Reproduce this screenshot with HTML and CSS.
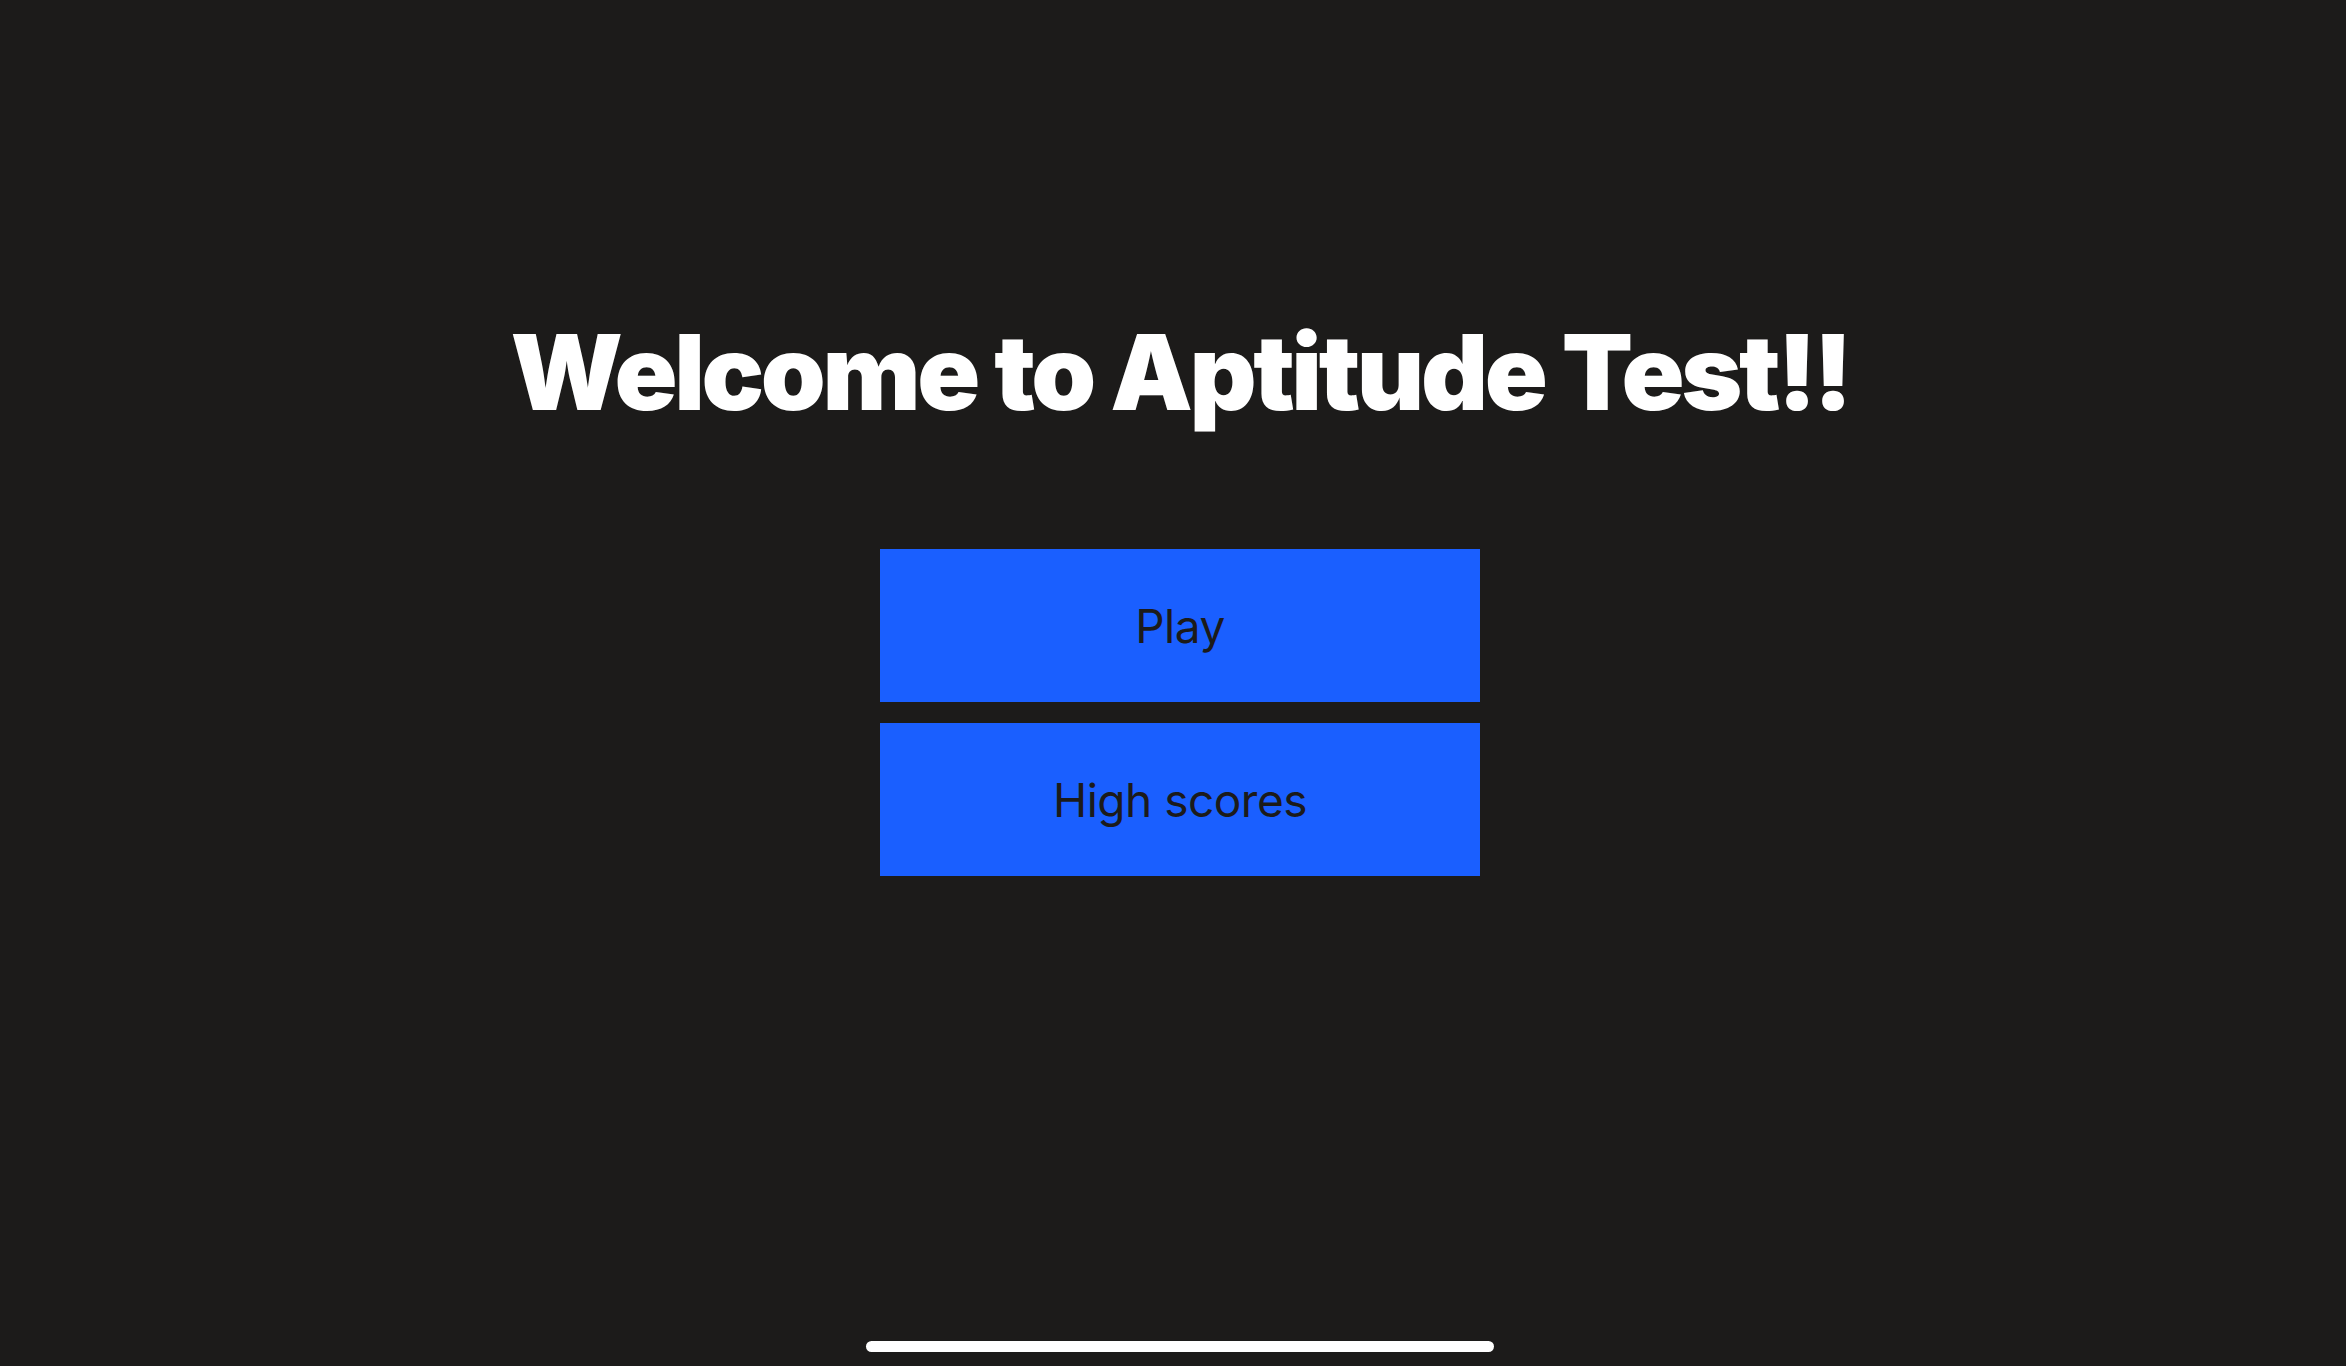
FILE: index.html
```html
<!DOCTYPE html>
<html lang="en">
<head>
<meta charset="utf-8">
<title>Aptitude Test</title>
<link rel="stylesheet" href="styles.css">
</head>
<body>
<main class="screen">
  <h1 class="title">Welcome to Aptitude Test!!</h1>
  <div class="menu">
    <button class="menu-btn">Play</button>
    <button class="menu-btn">High scores</button>
  </div>
</main>
<div class="home-indicator"></div>
</body>
</html>
```
FILE: styles.css
```css
html, body {
  margin: 0;
  padding: 0;
}
body {
  background: #1c1b1a;
  width: 2346px;
  height: 1366px;
  overflow: hidden;
  display: flex;
  flex-direction: column;
  align-items: center;
  padding-left: 14px;
  box-sizing: border-box;
  font-family: Inter, "Noto Sans", sans-serif;
}
.screen {
  flex: 1;
  display: flex;
  flex-direction: column;
  align-items: center;
  padding-top: 304px;
}
.title {
  margin: 0;
  color: #ffffff;
  font-size: 104px;
  font-weight: 900;
  line-height: 136px;
  letter-spacing: -3.4px;
  white-space: nowrap;
}
.menu {
  display: flex;
  flex-direction: column;
  gap: 21px;
  margin-top: 109px;
}
.menu-btn {
  width: 600px;
  height: 153px;
  border: none;
  border-radius: 0;
  background: #1a5fff;
  color: #1c1b1a;
  font-family: Inter, "Noto Sans", sans-serif;
  font-size: 46px;
  font-weight: 400;
  letter-spacing: -0.5px;
  padding: 0;
  cursor: pointer;
}
.home-indicator {
  width: 628px;
  height: 11px;
  border-radius: 6px;
  background: #ffffff;
  margin-bottom: 14px;
}
```
